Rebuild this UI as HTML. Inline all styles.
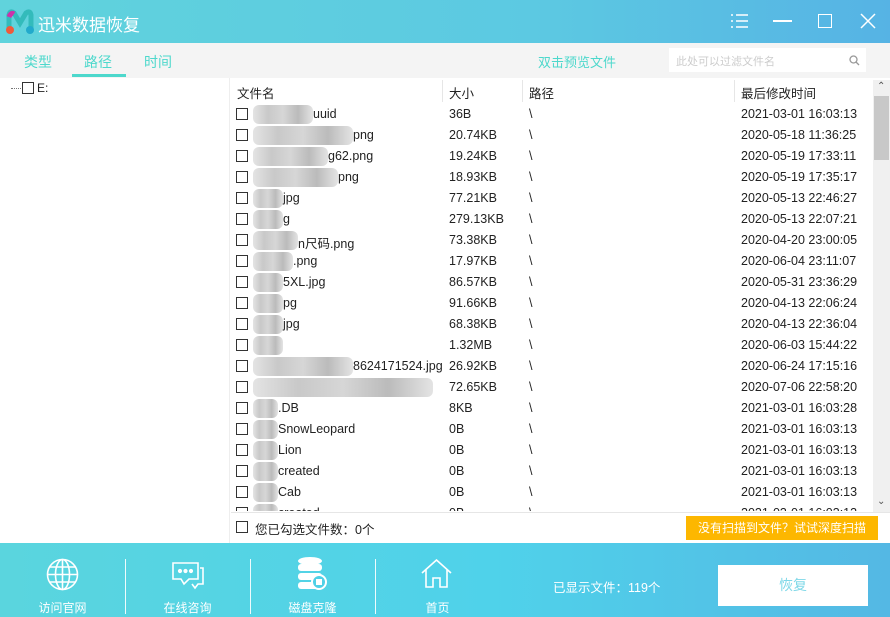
<!DOCTYPE html>
<html><head><meta charset="utf-8"><style>
*{margin:0;padding:0;box-sizing:border-box}
body{width:890px;height:617px;overflow:hidden;font-family:"Liberation Sans","Noto Sans CJK SC",sans-serif;font-size:12px;color:#222;background:#fff;position:relative}
.title{position:absolute;left:0;top:0;width:890px;height:43px;background:linear-gradient(90deg,#60d3dc,#5cc9e2 60%,#56b3e4)}
.title .t{position:absolute;left:38px;top:11px;color:#fff;font-size:17px}
.tabs{position:absolute;left:0;top:43px;width:890px;height:35px;background:#f4f4f4}
.tab{position:absolute;top:9px;color:#4dd8cc;font-size:14px}
.left{position:absolute;left:0;top:78px;width:230px;height:465px;background:#fff;border-right:1px solid #eee}
.cb{display:inline-block;width:12px;height:12px;border:1px solid #333;background:#fff;vertical-align:middle}
.hdr{position:absolute;top:80px;left:231px;width:642px;height:22px;font-size:12.5px}
.hdr span{position:absolute;top:3px}
.sep{position:absolute;top:80px;width:1px;height:22px;background:#e6e6e6}
.row{position:absolute;left:231px;width:642px;height:21px;font-size:12.5px}
.row span{position:absolute;top:3px}
.row .cb{position:absolute;left:5px;top:4px}
.blur{position:absolute;left:22px;top:1px;height:19px;background:linear-gradient(90deg,#ddd,#bbb,#ccc,#aaa,#ddd);opacity:.8;border-radius:6px}
.bot{position:absolute;left:0;top:543px;width:890px;height:74px;background:linear-gradient(90deg,#5ad5de,#4fd2ea 55%,#54b8e4)}
.bi{position:absolute;top:0;width:125px;height:74px;color:#fff;text-align:center}
.bi .l{position:absolute;bottom:1px;width:100%;font-size:12px}
.vs{position:absolute;top:16px;width:1px;height:55px;background:#fff;opacity:.9}
</style></head><body>
<div class="title">
<svg style="position:absolute;left:5px;top:9px" width="30" height="26" viewBox="0 0 30 26"><path d="M4 22 L4 6 Q5 1 9 4 L15 14 L21 4 Q25 1 26 6 L26 22" fill="none" stroke="#3bb" stroke-width="5" stroke-linecap="round"/><circle cx="5" cy="21" r="4" fill="#f05a3a"/><circle cx="25" cy="21" r="4" fill="#2ac"/><path d="M4 8 Q6 3 9 5" stroke="#c3a" stroke-width="5" fill="none"/></svg>
<div class="t">迅米数据恢复</div>
<svg style="position:absolute;left:730px;top:13px" width="18" height="16"><g stroke="#fff" stroke-width="1.5"><path d="M1 2h2M6 2h12M1 8h2M6 8h12M1 14h2M6 14h12"/></g></svg>
<div style="position:absolute;left:773px;top:20px;width:19px;height:2px;background:#fff"></div>
<div style="position:absolute;left:818px;top:14px;width:14px;height:14px;border:1.5px solid #fff"></div>
<svg style="position:absolute;left:860px;top:13px" width="16" height="16"><path d="M1 1L15 15M15 1L1 15" stroke="#fff" stroke-width="1.5"/></svg>
</div>
<div class="tabs">
<span class="tab" style="left:24px">类型</span>
<span class="tab" style="left:84px">路径</span>
<div style="position:absolute;left:72px;top:31px;width:54px;height:3px;background:#4dd8cc"></div>
<span class="tab" style="left:144px">时间</span>
<span class="tab" style="left:538px;font-size:13px">双击预览文件</span>
<div style="position:absolute;left:669px;top:5px;width:197px;height:24px;background:#fff"><span style="position:absolute;left:7px;top:5px;color:#ccc;font-size:11px">此处可以过滤文件名</span>
<svg style="position:absolute;left:180px;top:7px" width="11" height="11"><circle cx="4.5" cy="4.5" r="3.5" stroke="#999" fill="none" stroke-width="1.3"/><path d="M7 7L10 10" stroke="#999" stroke-width="1.3"/></svg></div>
</div>
<div class="left"><div style="position:absolute;left:11px;top:10px;width:10px;border-top:1px dotted #777"></div><span class="cb" style="position:absolute;left:22px;top:4px"></span><span style="position:absolute;left:37px;top:3px">E:</span></div>
<div class="hdr"><span style="left:6px">文件名</span><span style="left:218px">大小</span><span style="left:298px">路径</span><span style="left:510px">最后修改时间</span></div>
<div class="sep" style="left:442px"></div><div class="sep" style="left:522px"></div><div class="sep" style="left:734px"></div>
<div style="position:absolute;left:873px;top:80px;width:17px;height:432px;background:#f0f0f0"><div style="position:absolute;left:1px;top:16px;width:15px;height:64px;background:#c8c8c8"></div><span style="position:absolute;left:4px;top:1px;font-size:10px;color:#555">⌃</span><span style="position:absolute;left:4px;top:416px;font-size:10px;color:#555">⌄</span></div>
<div id="rows"></div>
<div style="position:absolute;left:231px;top:512px;width:659px;height:1px;background:#e6e6e6"></div>
<span class="cb" style="position:absolute;left:236px;top:521px"></span><span style="position:absolute;left:255px;top:519px;font-size:12.5px">您已勾选文件数：0个</span>
<div style="position:absolute;left:686px;top:516px;width:192px;height:24px;background:#fdb700;color:#fff;font-size:12px;text-align:center;line-height:24px">没有扫描到文件？试试深度扫描</div>
<div class="bot">
<div class="bi" style="left:0"><svg style="position:absolute;left:46px;top:15px" width="33" height="33" viewBox="0 0 33 33" fill="none" stroke="#fff" stroke-width="1.6"><circle cx="16.5" cy="16.5" r="15"/><ellipse cx="16.5" cy="16.5" rx="7" ry="15"/><path d="M16.5 1.5v30M1.5 16.5h30M4 9h25M4 24h25"/></svg><div class="l">访问官网</div></div>
<div class="vs" style="left:125px"></div>
<div class="bi" style="left:125px"><svg style="position:absolute;left:46px;top:17px" width="34" height="32" viewBox="0 0 34 32" fill="none" stroke="#fff" stroke-width="1.6"><path d="M2 3h25v16H18l-5 5-3-5H2z"/><path d="M29 8h3v16h-5l-3 4-3-4"/><circle cx="9" cy="11" r="1.3" fill="#fff"/><circle cx="14.5" cy="11" r="1.3" fill="#fff"/><circle cx="20" cy="11" r="1.3" fill="#fff"/></svg><div class="l">在线咨询</div></div>
<div class="vs" style="left:250px"></div>
<div class="bi" style="left:250px"><svg style="position:absolute;left:48px;top:14px" width="30" height="34" viewBox="0 0 30 34"><ellipse cx="12" cy="4" rx="12" ry="4" fill="#fff"/><rect x="0" y="7" width="24" height="7" rx="3" fill="#fff"/><rect x="0" y="16" width="24" height="7" rx="3" fill="#fff"/><rect x="0" y="25" width="24" height="7" rx="3" fill="#fff"/><circle cx="21" cy="25" r="7" fill="#4fd0e6" stroke="#fff" stroke-width="2"/><rect x="18" y="22" width="6" height="6" fill="#fff"/></svg><div class="l">磁盘克隆</div></div>
<div class="vs" style="left:375px"></div>
<div class="bi" style="left:375px"><svg style="position:absolute;left:46px;top:16px" width="31" height="29" viewBox="0 0 31 29" fill="none" stroke="#fff" stroke-width="1.6"><path d="M1 14L15.5 1 30 14M5 11v17h7v-9h7v9h7V11"/></svg><div class="l">首页</div></div>
<span style="position:absolute;left:553px;top:34px;color:#fff;font-size:12.5px">已显示文件：119个</span>
<div style="position:absolute;left:718px;top:22px;width:150px;height:41px;background:#fff;color:#7fd8e8;font-size:14px;text-align:center;line-height:41px">恢复</div>
</div>
<script>
var d=[["uuid",60,"36B","2021-03-01 16:03:13"],["png",100,"20.74KB","2020-05-18 11:36:25"],["g62.png",75,"19.24KB","2020-05-19 17:33:11"],["png",85,"18.93KB","2020-05-19 17:35:17"],["jpg",30,"77.21KB","2020-05-13 22:46:27"],["g",30,"279.13KB","2020-05-13 22:07:21"],["n尺码.png",45,"73.38KB","2020-04-20 23:00:05"],[".png",40,"17.97KB","2020-06-04 23:11:07"],["5XL.jpg",30,"86.57KB","2020-05-31 23:36:29"],["pg",30,"91.66KB","2020-04-13 22:06:24"],["jpg",30,"68.38KB","2020-04-13 22:36:04"],["",30,"1.32MB","2020-06-03 15:44:22"],["8624171524.jpg",100,"26.92KB","2020-06-24 17:15:16"],["",180,"72.65KB","2020-07-06 22:58:20"],[".DB",25,"8KB","2021-03-01 16:03:28"],["SnowLeopard",25,"0B","2021-03-01 16:03:13"],["Lion",25,"0B","2021-03-01 16:03:13"],["created",25,"0B","2021-03-01 16:03:13"],["Cab",25,"0B","2021-03-01 16:03:13"],["created",25,"0B","2021-03-01 16:03:13"]];
var h="";d.forEach(function(r,i){var t=104+i*21;h+='<div class="row" style="top:'+t+'px;'+(i==19?'height:8px;overflow:hidden':'')+'"><span class="cb"></span><div class="blur" style="width:'+r[1]+'px"></div><span style="left:'+(22+r[1])+'px">'+r[0]+'</span><span style="left:218px">'+r[2]+'</span><span style="left:298px">\\</span><span style="left:510px">'+r[3]+'</span></div>'});
document.getElementById("rows").innerHTML=h;
</script>
</body></html>
